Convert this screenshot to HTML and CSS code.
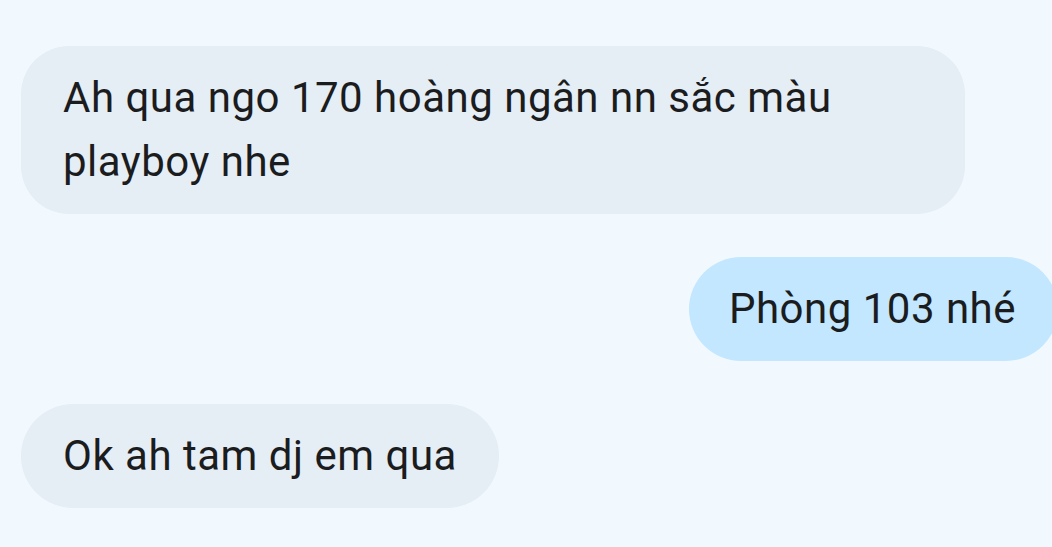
FILE: index.html
```html
<!DOCTYPE html>
<html lang="vi">
<head>
<meta charset="utf-8">
<link rel="stylesheet" href="styles.css">
</head>
<body>
<div class="chat">
  <div class="row in"><div class="bubble recv wide">Ah qua ngo 170 hoàng ngân nn sắc màu playboy nhe</div></div>
  <div class="row out"><div class="bubble sent">Phòng 103 nhé</div></div>
  <div class="row in"><div class="bubble recv">Ok ah tam dj em qua</div></div>
</div>
</body>
</html>
```
FILE: styles.css
```css
html, body {
  margin: 0;
  padding: 0;
  background: #f2f9fe;
  height: 100%;
  overflow: hidden;
}
.chat {
  display: flex;
  flex-direction: column;
  gap: 43px;
  padding: 46px 0 0 21px;
  font-family: Roboto, "Noto Sans", sans-serif;
  font-size: 42px;
  letter-spacing: 0.5px;
  line-height: 64px;
  color: #1b1c1e;
}
.row {
  display: flex;
}
.row.in { justify-content: flex-start; }
.row.out { justify-content: flex-end; margin-right: -6px; }
.bubble {
  padding: 20px 42px;
  border-radius: 52px;
  box-sizing: border-box;
}
.recv { background: #e5edf5; }
.sent { background: #c2e7ff; padding-left: 40px; }
.wide { width: 944px; border-radius: 48px; }
```
